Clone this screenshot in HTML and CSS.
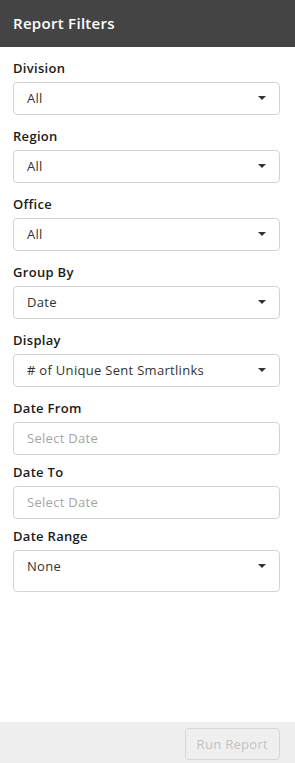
FILE: index.html
```html
<!DOCTYPE html>
<html lang="en">
<head>
    <meta charset="UTF-8">
    <meta name="viewport" content="width=device-width, initial-scale=1.0">
    <title>Report Filters</title>
    <link rel="stylesheet" href="styles.css">
</head>
<body>

<div class="panel">
    <div class="panel-header">Report Filters</div>

    <div class="panel-body">
        <div class="field">
            <label>Division</label>
            <div class="select-box"><span>All</span><i class="caret"></i></div>
        </div>
        <div class="field">
            <label>Region</label>
            <div class="select-box"><span>All</span><i class="caret"></i></div>
        </div>
        <div class="field">
            <label>Office</label>
            <div class="select-box"><span>All</span><i class="caret"></i></div>
        </div>
        <div class="field">
            <label>Group By</label>
            <div class="select-box"><span>Date</span><i class="caret"></i></div>
        </div>
        <div class="field">
            <label>Display</label>
            <div class="select-box"><span># of Unique Sent Smartlinks</span><i class="caret"></i></div>
        </div>
        <div class="field field-date">
            <label for="date-from">Date From</label>
            <input type="text" id="date-from" placeholder="Select Date">
        </div>
        <div class="field field-date">
            <label for="date-to">Date To</label>
            <input type="text" id="date-to" placeholder="Select Date">
        </div>
        <div class="field">
            <label>Date Range</label>
            <div class="select-box select-tall"><span>None</span><i class="caret"></i></div>
        </div>
    </div>

    <div class="panel-footer">
        <button class="btn-run" disabled>Run Report</button>
    </div>
</div>

</body>
</html>
```

FILE: styles.css
```css
* {
    margin: 0;
    padding: 0;
    box-sizing: border-box;
}

body {
    font-family: "Open Sans", Inter, sans-serif;
    letter-spacing: 0.3px;
    background-color: #fff;
    color: #222;
}

.panel {
    display: flex;
    flex-direction: column;
    min-height: 100vh;
}

.panel-header {
    height: 47px;
    padding: 0 13px;
    background-color: #444;
    color: #fff;
    font-size: 15px;
    font-weight: 600;
    line-height: 46px;
}

.panel-body {
    flex: 1;
    padding: 11px 15px 0 13px;
}

.field {
    margin-bottom: 11px;
}

.field-date {
    margin-bottom: 7px;
}

label {
    display: block;
    margin-bottom: 4px;
    font-size: 13px;
    font-weight: 600;
    line-height: 20px;
    color: #1a1a1a;
}

.select-box,
input[type="text"] {
    width: 100%;
    height: 33px;
    padding: 0 13px 1px;
    font-family: inherit;
    font-size: 13px;
    letter-spacing: inherit;
    color: #333;
    border: 1px solid #d4d4d4;
    border-radius: 4px;
    background: #fff;
}

.select-box {
    display: flex;
    align-items: center;
    justify-content: space-between;
}

.select-tall {
    height: 42px;
    padding-bottom: 11px;
}

input[type="text"]::placeholder {
    color: #a5a5a5;
}

.caret {
    width: 0;
    height: 0;
    border-left: 4px solid transparent;
    border-right: 4px solid transparent;
    border-top: 4px solid #333;
}

.panel-footer {
    height: 41px;
    padding: 6px 15px 0 0;
    display: flex;
    justify-content: flex-end;
    align-items: flex-start;
    background-color: #eee;
}

.btn-run {
    height: 32px;
    padding: 0 11px;
    font-family: inherit;
    font-size: 13px;
    letter-spacing: inherit;
    color: #c2c2c2;
    background-color: #efefef;
    border: 1px solid #d6d6d6;
    border-radius: 4px;
}
```
